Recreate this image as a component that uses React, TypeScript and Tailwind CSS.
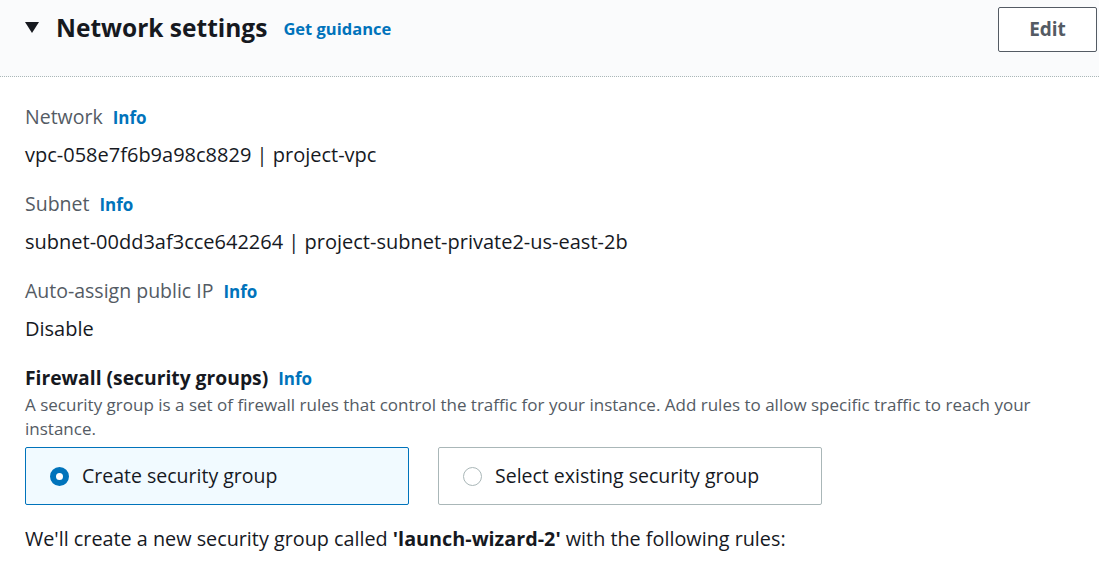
const font = { fontFamily: '"Open Sans", "Noto Sans", Arial, sans-serif' }

function Info() {
  return <span className="ml-[10px] text-[17px] font-bold text-[#0073bb]">Info</span>
}

function Field({ label, value }: { label: string; value: string }) {
  return (
    <div className="mb-[21px]">
      <div className="flex items-baseline text-[19.5px] text-[#545b64] leading-[28px]">
        {label}
        <Info />
      </div>
      <div className="mt-[9px] text-[20px] text-[#16191f] leading-[28px]">{value}</div>
    </div>
  )
}

export default function App() {
  return (
    <div className="w-[1099px] h-[568px] bg-white overflow-hidden" style={font}>
      <div className="flex items-start justify-between h-[77px] bg-[#fafbfc] border-b border-dotted border-[#aab7b8] pl-[25px] pr-[2px] pt-[7px]">
        <div className="flex items-center mt-[6px]">
          <svg width="14" height="12" viewBox="0 0 14 12" className="mr-[17px]">
            <polygon points="0,0 14,0 7,11" fill="#16191f" />
          </svg>
          <span className="text-[24.5px] font-bold text-[#16191f] leading-[30px]">Network settings</span>
          <span className="ml-[16px] text-[16.5px] font-bold text-[#0073bb] mt-[3px]">Get guidance</span>
        </div>
        <button className="w-[99px] h-[45px] border border-[#545b64] rounded-[2px] bg-white text-[19px] font-bold text-[#545b64]">
          Edit
        </button>
      </div>

      <div className="pl-[25px] pr-[50px] pt-[26px]">
        <Field label="Network" value="vpc-058e7f6b9a98c8829 | project-vpc" />
        <Field label="Subnet" value="subnet-00dd3af3cce642264 | project-subnet-private2-us-east-2b" />
        <Field label="Auto-assign public IP" value="Disable" />

        <div className="flex items-baseline text-[19.3px] font-bold text-[#16191f] leading-[28px] mt-[3px]">
          Firewall (security groups)
          <Info />
        </div>
        <p className="text-[17px] text-[#545b64] leading-[24px] pr-[10px]">
          A security group is a set of firewall rules that control the traffic for your instance. Add rules to allow specific traffic to reach your instance.
        </p>

        <div className="flex gap-[29px] mt-[6px]">
          <div className="flex items-center w-[384px] h-[58px] border border-[#0073bb] rounded-[2px] bg-[#f1faff] pl-[24px]">
            <span className="w-[19px] h-[19px] rounded-full border-[6px] border-[#0073bb] bg-white mr-[13px]" />
            <span className="text-[19.5px] text-[#16191f]">Create security group</span>
          </div>
          <div className="flex items-center w-[384px] h-[58px] border border-[#aab7b8] rounded-[2px] bg-white pl-[24px]">
            <span className="w-[19px] h-[19px] rounded-full border-[1.5px] border-[#aab7b8] bg-white mr-[13px]" />
            <span className="text-[19.5px] text-[#16191f]">Select existing security group</span>
          </div>
        </div>

        <p className="mt-[20px] text-[19.8px] text-[#16191f] leading-[28px]">
          We'll create a new security group called <b>'launch-wizard-2'</b> with the following rules:
        </p>
      </div>
    </div>
  )
}
